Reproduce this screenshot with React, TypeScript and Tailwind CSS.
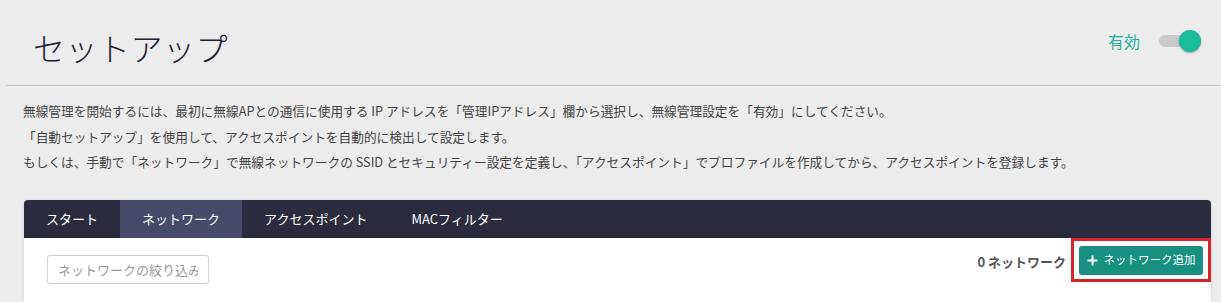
import { useState } from 'react';

const tabs = ['スタート', 'ネットワーク', 'アクセスポイント', 'MACフィルター'];

const App = () => {
  const [enabled, setEnabled] = useState(true);
  const [activeTab, setActiveTab] = useState(1);

  return (
    <div
      className="h-[302px] w-[1221px] overflow-hidden bg-[#ececec] text-[#333]"
      style={{ fontFamily: '"Noto Sans CJK JP", "Noto Sans", sans-serif' }}
    >
      <header className="ml-[6px] flex h-[86px] items-center justify-between border-b border-[#c6c6c6] pl-[27px] pr-[24px]">
        <h1 className="mt-[8px] text-[32px] font-light leading-none tracking-[0.5px] text-[#222233]">
          セットアップ
        </h1>
        <div className="mt-[-4px] flex items-center gap-[19px]">
          <span className="text-[16px] text-[#26b39b]">有効</span>
          <button
            type="button"
            onClick={() => setEnabled(!enabled)}
            className="relative h-[12px] w-[38px] rounded-full bg-[#c9c9c9]"
          >
            <span
              className={`absolute top-[-5px] h-[22px] w-[22px] rounded-full bg-[#1abc9c] shadow-[0_1px_2px_rgba(0,0,0,0.3)] ${
                enabled ? 'right-[-4px]' : 'left-[-4px]'
              }`}
            />
          </button>
        </div>
      </header>

      <div className="px-[23px] pt-[12px] text-[12.7px] leading-[25.5px] text-[#444]">
        <p>
          無線管理を開始するには、最初に無線APとの通信に使用する IP アドレスを「管理IPアドレス」欄から選択し、無線管理設定を「有効」にしてください。
        </p>
        <p>「自動セットアップ」を使用して、アクセスポイントを自動的に検出して設定します。</p>
        <p>
          もしくは、手動で「ネットワーク」で無線ネットワークの SSID とセキュリティー設定を定義し、「アクセスポイント」でプロファイルを作成してから、アクセスポイントを登録します。
        </p>
      </div>

      <section className="ml-[24px] mr-[10px] mt-[25px] rounded-t-[4px] bg-white shadow-[0_1px_3px_rgba(0,0,0,0.15)]">
        <nav className="flex h-[38px] rounded-t-[4px] bg-[#2a2b3c] text-[13px] text-white">
          {tabs.map((tab, i) => (
            <button
              key={tab}
              type="button"
              onClick={() => setActiveTab(i)}
              className={`h-full px-[22px] ${activeTab === i ? 'bg-[#474a6a]' : ''}`}
            >
              {tab}
            </button>
          ))}
        </nav>
        <div className="flex h-[80px] items-start justify-between pl-[23px]">
          <input
            type="text"
            placeholder="ネットワークの絞り込み"
            className="mt-[17px] h-[29px] w-[162px] rounded-[3px] border border-[#cfcfcf] px-[10px] text-[13px] placeholder:text-[#9a9a9a] focus:outline-none"
          />
          <div className="flex items-center gap-[5px]">
            <span className="mt-[5px] text-[13px] font-bold text-[#555]">0 ネットワーク</span>
            <div className="border-[3px] border-[#d9232d] pb-[5px] pl-[6px] pr-[6px] pt-[6px]">
              <button
                type="button"
                className="flex h-[27px] w-[122px] items-center justify-center gap-[6px] rounded-[2px] bg-[#16917f] text-[11.5px] text-white shadow-[0_0_0_1px_#2a7d9c]"
              >
                <svg width="11" height="11" viewBox="0 0 11 11">
                  <path d="M5.5 0.5v10M0.5 5.5h10" stroke="white" strokeWidth="2" />
                </svg>
                ネットワーク追加
              </button>
            </div>
          </div>
        </div>
      </section>
    </div>
  );
};

export default App;
